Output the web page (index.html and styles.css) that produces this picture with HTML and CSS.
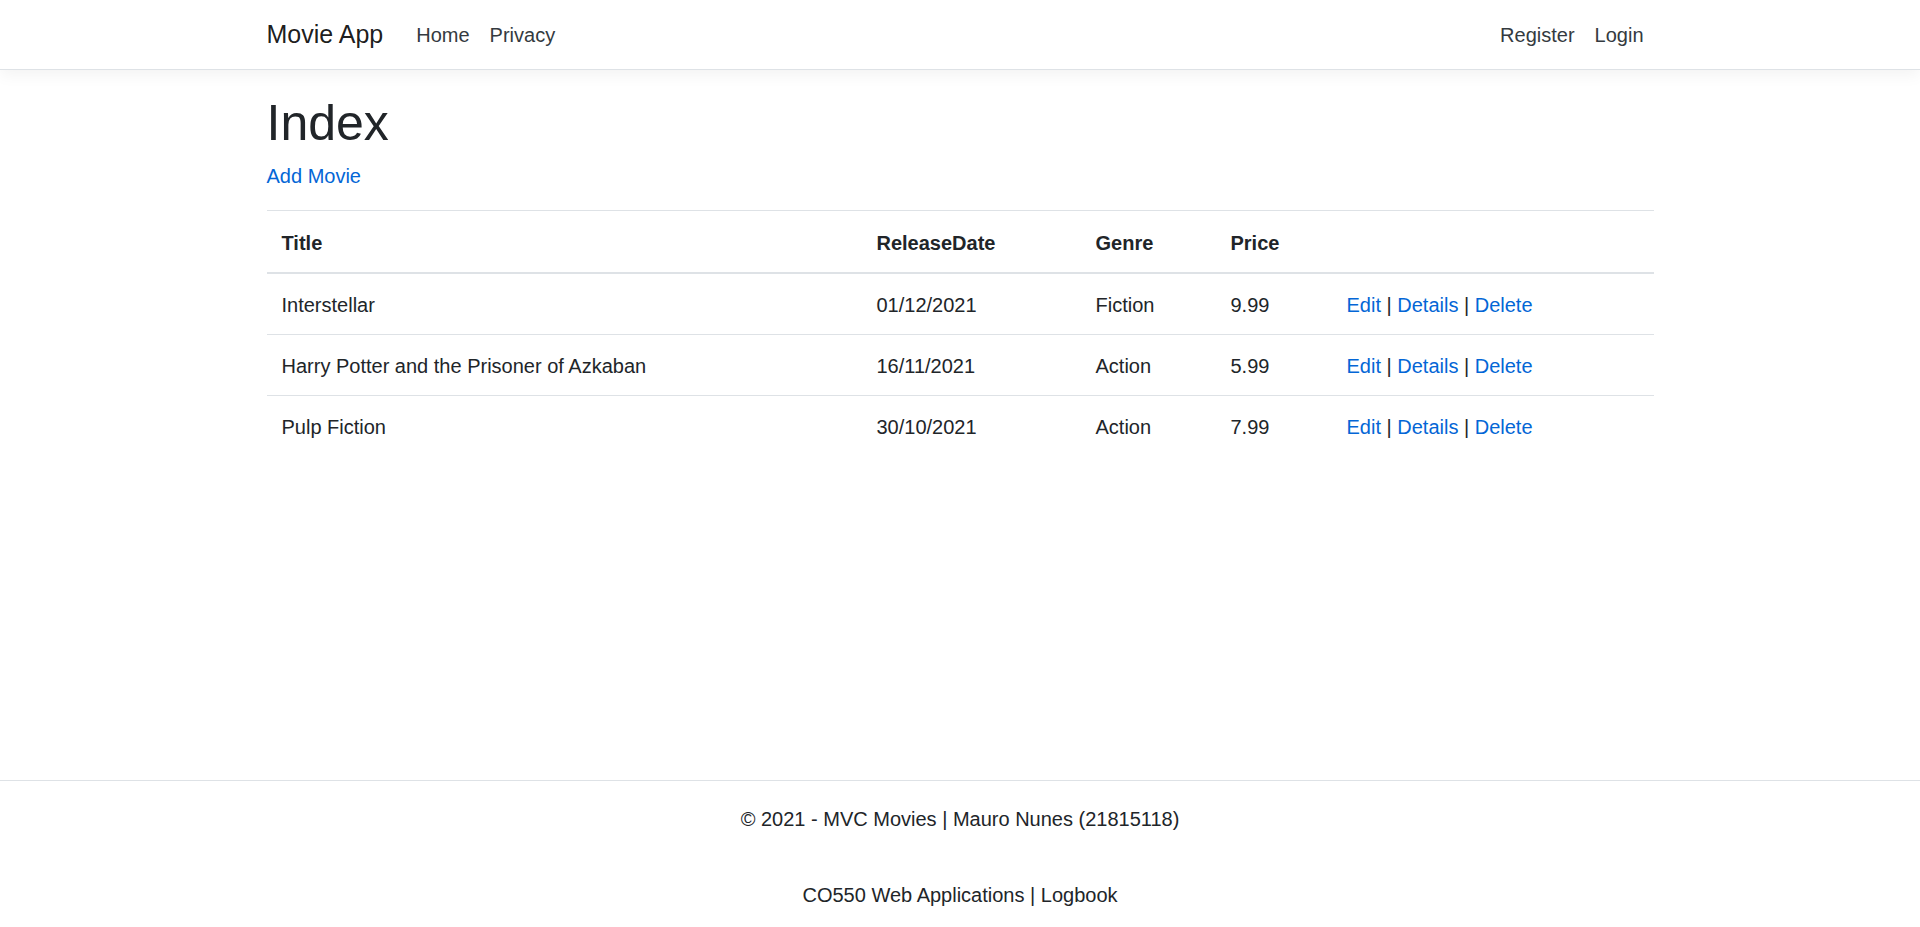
FILE: index.html
```html
<!DOCTYPE html>
<html lang="en">
<head>
<meta charset="utf-8">
<title>Index - Movie App</title>
<link rel="stylesheet" href="styles.css">
</head>
<body>
<header class="site-header">
  <nav class="navbar">
    <div class="container nav-inner">
      <a class="brand" href="#">Movie App</a>
      <ul class="nav-list">
        <li><a class="nav-link" href="#">Home</a></li>
        <li><a class="nav-link" href="#">Privacy</a></li>
      </ul>
      <ul class="nav-list nav-right">
        <li><a class="nav-link" href="#">Register</a></li>
        <li><a class="nav-link" href="#">Login</a></li>
      </ul>
    </div>
  </nav>
</header>
<main class="container main">
  <h1 class="page-title">Index</h1>
  <p class="add-line"><a class="link" href="#">Add Movie</a></p>
  <table class="table">
    <thead>
      <tr>
        <th class="col-title">Title</th>
        <th class="col-date">ReleaseDate</th>
        <th class="col-genre">Genre</th>
        <th class="col-price">Price</th>
        <th class="col-actions"></th>
      </tr>
    </thead>
    <tbody>
      <tr>
        <td>Interstellar</td>
        <td>01/12/2021</td>
        <td>Fiction</td>
        <td>9.99</td>
        <td><a class="link" href="#">Edit</a> | <a class="link" href="#">Details</a> | <a class="link" href="#">Delete</a></td>
      </tr>
      <tr>
        <td>Harry Potter and the Prisoner of Azkaban</td>
        <td>16/11/2021</td>
        <td>Action</td>
        <td>5.99</td>
        <td><a class="link" href="#">Edit</a> | <a class="link" href="#">Details</a> | <a class="link" href="#">Delete</a></td>
      </tr>
      <tr>
        <td>Pulp Fiction</td>
        <td>30/10/2021</td>
        <td>Action</td>
        <td>7.99</td>
        <td><a class="link" href="#">Edit</a> | <a class="link" href="#">Details</a> | <a class="link" href="#">Delete</a></td>
      </tr>
    </tbody>
  </table>
</main>
<footer class="footer">
  <div class="footer-line">© 2021 - MVC Movies | Mauro Nunes (21815118)</div>
  <div class="footer-line">CO550 Web Applications | Logbook</div>
</footer>
</body>
</html>
```

FILE: styles.css
```css
* { box-sizing: border-box; }

html, body {
  margin: 0;
  padding: 0;
}

body {
  font-family: "Liberation Sans", Arial, sans-serif;
  font-size: 20px;
  line-height: 1.5;
  color: #212529;
  background: #fff;
  display: flex;
  flex-direction: column;
  min-height: calc(100vh + 6px);
}

a { text-decoration: none; }

.container {
  width: 1387px;
  margin-left: auto;
  margin-right: auto;
}

/* Navbar */
.site-header {
  margin-bottom: 20px;
}

.navbar {
  background: #fff;
  border-bottom: 1px solid #dee2e6;
  box-shadow: 0 5px 15px rgba(0, 0, 0, 0.05);
}

.nav-inner {
  display: flex;
  align-items: center;
  height: 69px;
  padding-top: 1px;
}

.brand {
  font-size: 25px;
  line-height: 37.5px;
  color: rgba(0, 0, 0, 0.9);
  margin-right: 23px;
  white-space: nowrap;
}

.nav-list {
  list-style: none;
  margin: 0;
  padding: 0;
  display: flex;
}

.nav-right {
  margin-left: auto;
}

.nav-link {
  display: block;
  padding: 10px 10px;
  color: #343a40;
  line-height: 30px;
}

/* Main */
.main {
  flex: 1 0 auto;
}

.page-title {
  font-size: 50px;
  font-weight: 500;
  line-height: 60px;
  margin: 0 0 10px;
  padding-top: 3px;
  height: 60px;
}

.add-line {
  margin: 0 0 20px;
  padding-top: 1px;
  height: 30px;
}

.link {
  color: #0366d6;
}

/* Table */
.table {
  width: 100%;
  border-collapse: collapse;
  table-layout: fixed;
  color: #212529;
}

.table th,
.table td {
  padding: 16px 15px 14px;
  line-height: 30px;
  text-align: left;
  vertical-align: top;
  border-top: 1px solid #dee2e6;
  white-space: nowrap;
}

.table thead th {
  font-weight: 700;
  padding-top: 17px;
  border-bottom: 2px solid #dee2e6;
}

.col-title { width: 595px; }
.col-date { width: 219px; }
.col-genre { width: 135px; }
.col-price { width: 116px; }
.col-actions { width: auto; }

/* Footer */
.footer {
  border-top: 1px solid #dee2e6;
  text-align: center;
  white-space: nowrap;
  color: #212529;
}

.footer-line {
  line-height: 75px;
  padding-top: 1px;
}
```
